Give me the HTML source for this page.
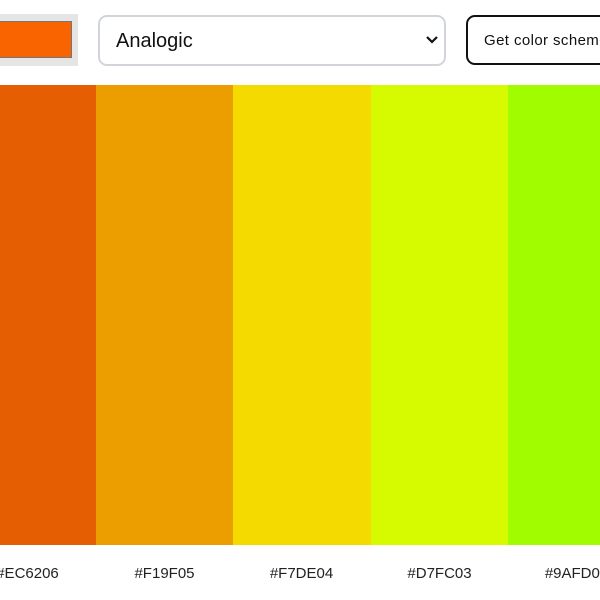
<!DOCTYPE html><html><head><style>
body{margin:0;width:600px;height:600px;overflow:hidden;background:#fff;font-family:"Liberation Sans",sans-serif;position:relative}
.a{position:absolute}
.col{position:absolute;top:85px;height:460px}
.lbl{position:absolute;top:565px;font-size:15px;color:#222;width:137px;text-align:center}
</style></head><body>
<div class="a" style="left:0;top:14px;width:78px;height:52px;background:#e5e5e5"></div>
<div class="a" style="left:-2px;top:21px;width:72px;height:35px;background:#f96400;border:1px solid #777"></div>
<div class="a" style="left:98px;top:15px;width:344px;height:47px;border:2px solid #d1d5db;border-radius:9px"></div>
<div class="a" style="left:116px;top:30px;font-size:20px;color:#111">Analogic</div>
<svg class="a" style="left:425px;top:35px" width="14" height="10"><path d="M2 2L7 7L12 2" stroke="#111" stroke-width="2.2" fill="none"/></svg>
<div class="a" style="left:466px;top:15px;width:160px;height:46px;border:2px solid #111;border-radius:9px"></div>
<div class="a" style="left:484px;top:32px;font-size:15px;color:#111;white-space:nowrap;letter-spacing:0.4px">Get color scheme</div>
<div class="col" style="left:0;width:96px;background:#e55f02"></div>
<div class="col" style="left:96px;width:137px;background:#ec9e00"></div>
<div class="col" style="left:233px;width:138px;background:#f5da00"></div>
<div class="col" style="left:371px;width:137px;background:#d6fa00"></div>
<div class="col" style="left:508px;width:92px;background:#a2fc00"></div>
<div class="lbl" style="left:-41px">#EC6206</div>
<div class="lbl" style="left:96px">#F19F05</div>
<div class="lbl" style="left:233px">#F7DE04</div>
<div class="lbl" style="left:371px">#D7FC03</div>
<div class="lbl" style="left:508px">#9AFD03</div>
</body></html>
